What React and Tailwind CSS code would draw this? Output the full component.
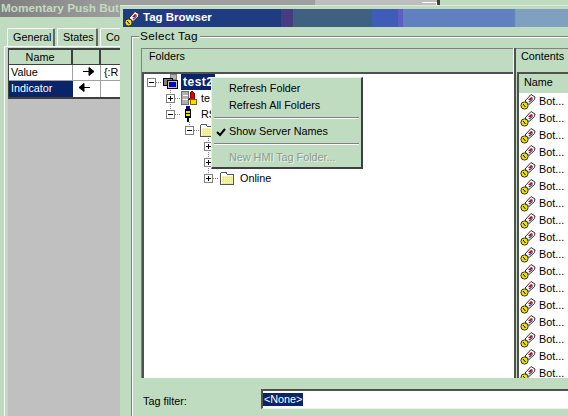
const TagIcon = ({ className = "" }) => (
  <svg width="16" height="17" viewBox="0 0 16 17" className={className}>
    <path d="M5 8 L11 1.5 L15 4 L14.5 6.5 L9 11.5 Z" fill="#fff" stroke="#303030" />
    <path d="M8 7 L11 4 L13 5 L10.5 7.5 Z" fill="#d80000" />
    <path d="M8.5 8.5 L10.5 7.5 L13 5.5 L12.5 7 L9.5 9.5 Z" fill="#1030c0" />
    <circle cx="4.5" cy="12.5" r="3.6" fill="#f0e000" stroke="#303030" />
    <path d="M3 11 L5.5 14" stroke="#000" />
  </svg>
);

// one tree row's guide lines and +/- box
const Guides = ({ x, sign, up, down, width }) => (
  <svg width={width} height="16" className="shrink-0" shapeRendering="crispEdges">
    {up && <path d={`M${x + 0.5} 0 V4`} stroke="#808080" strokeDasharray="1 1" />}
    {down && <path d={`M${x + 0.5} 12 V16`} stroke="#808080" strokeDasharray="1 1" />}
    <path d={`M${x + 5} 8.5 H${width}`} stroke="#808080" strokeDasharray="1 1" />
    <rect x={x - 4 + 0.5} y="4.5" width="8" height="8" fill="#fff" stroke="#808080" />
    <path d={`M${x - 2} 8.5 H${x + 3}`} stroke="#000" />
    {sign === "+" && <path d={`M${x + 0.5} 6 V11`} stroke="#000" />}
  </svg>
);

const Folder = () => (
  <svg width="17" height="16" viewBox="0 0 17 16" className="shrink-0" shapeRendering="crispEdges">
    <path d="M1.5 14.5 V3.5 L3 2.5 H7 L8.5 4.5 H14.5 V14.5 Z" fill="#fff" stroke="#555" />
    <rect x="3" y="6" width="11" height="8" fill="#f2ec7a" />
    <path d="M3 6 H14 M3 8 H14 M3 10 H14 M3 12 H14" stroke="#fffbd0" strokeDasharray="1 1" />
  </svg>
);

const Computers = () => (
  <svg width="18" height="16" viewBox="0 0 18 16" className="shrink-0" shapeRendering="crispEdges">
    <rect x="8.5" y="0.5" width="6" height="5" fill="#b0b0b0" stroke="#808080" />
    <rect x="1.5" y="4.5" width="9" height="7" fill="#808080" stroke="#000" />
    <rect x="5.5" y="6.5" width="10" height="8" fill="#c0c0c0" stroke="#000" />
    <rect x="7" y="8" width="7" height="5" fill="#0000d0" />
  </svg>
);

const Server = () => (
  <svg width="17" height="16" viewBox="0 0 17 16" className="shrink-0" shapeRendering="crispEdges">
    <rect x="0.5" y="1.5" width="7" height="13" fill="#b0b0b0" stroke="#707070" />
    <path d="M2 5.5 H7 M2 9.5 H7" stroke="#fff" />
    <path d="M9 8 V3 L11 1 L13 3 V8 L14 9 H8 Z" fill="#e00000" stroke="#800000" />
    <rect x="9.5" y="9.5" width="6" height="5" fill="#f0e000" stroke="#806000" />
  </svg>
);

const Driver = () => (
  <svg width="12" height="16" viewBox="0 0 12 16" className="shrink-0" shapeRendering="crispEdges">
    <rect x="5" y="0" width="4" height="3" fill="#0000c0" />
    <rect x="4" y="3" width="6" height="9" fill="#000" />
    <rect x="5" y="5" width="4" height="2" fill="#f0e000" />
    <rect x="5" y="8" width="4" height="2" fill="#f0e000" />
    <rect x="6" y="12" width="2" height="4" fill="#000" />
  </svg>
);

const TabBtn = ({ label, w }) => (
  <div className={`${w} h-[18px] mr-[2px] shrink-0 pl-[5px] flex items-center rounded-t-[2px] border-t border-l border-white border-r-2 border-r-[#606860]`}>
    {label}
  </div>
);

const rows = Array.from({ length: 17 });

export default function App() {
  return (
    <div className="w-[568px] h-[416px] flex overflow-hidden bg-[#c0dcc0] text-black text-[10.8px] font-['Liberation_Sans',sans-serif]">
      {/* window behind */}
      <div className="w-[120px] shrink-0 flex flex-col overflow-hidden">
        <div className="h-[17px] bg-[linear-gradient(90deg,#808080,#a09fa0)] text-[#c0dcc0] font-bold text-[11.8px] leading-[17px] pl-[1px] whitespace-nowrap">
          Momentary Push But
        </div>
        <div className="flex pl-[7px] mt-[11px] overflow-hidden">
          <TabBtn label="General" w="w-[48px]" />
          <TabBtn label="States" w="w-[41px]" />
          <TabBtn label="Con" w="w-[40px]" />
        </div>
        <div className="flex-1 ml-[4px] border-l border-t border-white pl-[3px] pt-[1px] flex flex-col min-h-0">
          <div className="border-l border-t-2 border-[#404040] grid grid-cols-[64px_28px_1fr] grid-rows-[15px_16px_16px] border-b-2 bg-white">
            <div className="bg-[#c0dcc0] border-r-2 border-b border-[#404040] text-center leading-[15px]">Name</div>
            <div className="bg-[#c0dcc0] border-r-2 border-b border-[#404040]" />
            <div className="bg-[#c0dcc0] border-b border-[#404040]" />
            <div className="border-r border-b border-[#a0a0a0] pl-[2px] leading-[15px]">Value</div>
            <div className="border-r border-b border-[#a0a0a0] flex justify-end items-center pr-[5px] pb-[2px]">
              <svg width="12" height="9" viewBox="0 0 12 9"><path d="M0 4.5 H7 M6 0.5 L11 4.5 L6 8.5 Z" stroke="#000" fill="#000" /></svg>
            </div>
            <div className="border-b border-[#a0a0a0] pl-[3px] leading-[15px]">{"{:R"}</div>
            <div className="bg-[#0a246a] text-white pl-[2px] leading-[15px]">Indicator</div>
            <div className="border-r border-[#a0a0a0] flex items-center pl-[5px] pb-[3px]">
              <svg width="12" height="9" viewBox="0 0 12 9"><path d="M12 4.5 H5 M6 0.5 L1 4.5 L6 8.5 Z" stroke="#000" fill="#000" /></svg>
            </div>
            <div />
          </div>
          <div className="flex-1 bg-[#c0c0c0]" />
        </div>
      </div>

      {/* tag browser */}
      <div className="flex-1 min-w-0 flex flex-col">
        <div className="h-[6px] flex border-b border-[#d8ecd8] shrink-0">
          <div className="w-[195px] bg-[#a09fa0]" />
          <div className="w-[122px] bg-[#bebebe] flex justify-end">
            <div className="w-[15px] h-[3px] mt-[2px] border-t border-r border-white" />
          </div>
          <div className="w-[3px] bg-[#404040]" />
        </div>
        <div className="h-[3px] shrink-0" />
        <div className="h-[18px] ml-[3px] shrink-0 flex items-center bg-[linear-gradient(90deg,#1f3c80_41px,#2a3488_41px,#2a3488_60px,#1f3c80_60px,#1f3c80_158px,#483c80_158px,#483c80_170px,#3f6080_170px,#3f6080_249px,#3f5cb8_249px,#3f5cb8_275px,#5c60c0_275px,#5c60c0_280px,#6080c0_280px,#6080c0_391px,#80a0c0_393px)]">
          <TagIcon className="ml-[1px] mr-[3px]" />
          <span className="text-white font-bold text-[11.5px]">Tag Browser</span>
        </div>

        <div className="flex-1 min-h-0 flex flex-col pl-[11px]">
          <fieldset className="flex-1 min-h-0 border-l border-t border-[#808080] shadow-[inset_1px_1px_0_#fff] min-w-0 mt-[2px]">
            <legend className="ml-[7px] pl-[1px] pr-[2px] leading-[14px] bg-[#c0dcc0] text-[11.8px] tracking-[0.3px]">Select Tag</legend>
            <div className="flex pl-[9px] pt-[5px] overflow-hidden">
              <div className="w-[372px] shrink-0 flex flex-col border-l border-[#808080]">
                <div className="h-[24px] border-t border-[#808080] pl-[7px] leading-[14px]">Folders</div>
                <div className="relative h-[306px] bg-white border-t-2 border-l-2 border-[#505050]">
                  {/* tree */}
                  <div className="flex items-center h-4">
                    <Guides x={7} sign="-" width={18} />
                    <Computers />
                    <span className="ml-[1px] pl-[2px] w-[34px] shrink-0 h-4 bg-[#0a246a] text-white font-bold text-[12px] tracking-[0.5px] leading-[16px]">test2</span>
                  </div>
                  <div className="flex items-center h-4">
                    <Guides x={26} sign="+" up down width={37} />
                    <Server />
                    <span className="ml-[3px]">te</span>
                  </div>
                  <div className="flex items-center h-4">
                    <Guides x={26} sign="-" up width={37} />
                    <Driver />
                    <span className="ml-[8px]">RS</span>
                  </div>
                  <div className="flex items-center h-4">
                    <Guides x={45} sign="-" up width={55} />
                    <Folder />
                  </div>
                  <div className="flex items-center h-4 pl-[60px]"><Guides x={4} sign="+" up down width={15} /></div>
                  <div className="flex items-center h-4 pl-[60px]"><Guides x={4} sign="+" up down width={15} /></div>
                  <div className="flex items-center h-4 pl-[60px]">
                    <Guides x={4} sign="+" up width={15} />
                    <Folder />
                    <span className="ml-[4px]">Online</span>
                  </div>

                  {/* context menu */}
                  <div className="absolute left-[67px] top-[3px] w-[152px] h-[92px] bg-[#c0dcc0] border-t border-l border-[#e4f2e4] border-r-2 border-b-2 border-r-[#404040] border-b-[#404040] flex flex-col">
                    <div className="h-[17px] mt-[2px] pl-[17px] leading-[17px]">Refresh Folder</div>
                    <div className="h-[17px] pl-[17px] leading-[17px]">Refresh All Folders</div>
                    <div className="mx-[2px] mt-[3px] mb-[4px] border-t border-b border-t-[#808080] border-b-white" />
                    <div className="h-[17px] pl-[4px] flex items-center">
                      <svg width="13" height="10" viewBox="0 0 13 10"><path d="M1 5 L4 8 L9 2" fill="none" stroke="#000" strokeWidth="2" /></svg>
                      <span>Show Server Names</span>
                    </div>
                    <div className="mx-[2px] mt-[3px] mb-[4px] border-t border-b border-t-[#808080] border-b-white" />
                    <div className="h-[17px] pl-[17px] leading-[17px] text-[#8c9c8c] [text-shadow:1px_1px_0_#e8f4e8]">New HMI Tag Folder...</div>
                  </div>
                </div>
              </div>

              <div className="w-[3px] shrink-0 border-l border-white bg-[#c0dcc0] border-r-2 border-r-[#505050]" />

              <div className="flex-1 min-w-0 flex flex-col">
                <div className="h-[24px] pl-[5px] border-t border-[#808080] leading-[14px] whitespace-nowrap">Contents</div>
                <div className="h-[306px] ml-[1px] bg-white border-t-2 border-l-2 border-[#505050] overflow-hidden">
                  <div className="h-[19px] bg-[#c0dcc0] pl-[5px] leading-[16px]">Name</div>
                  {rows.map((_, i) => (
                    <div key={i} className="h-[17px] flex items-center pl-[1px]">
                      <TagIcon className="shrink-0" />
                      <span className="ml-[3px]">Bot...</span>
                    </div>
                  ))}
                </div>
              </div>
            </div>

            <div className="flex items-center pl-[11px] pt-[11px]">
              <span className="w-[118px] shrink-0 pt-[4px]">Tag filter:</span>
              <div className="flex-1 h-[20px] bg-white border-t-2 border-l-2 border-[#505050] border-b border-b-[#e8f4e8] flex items-center">
                <span className="bg-[#0a246a] text-white leading-[13px] px-[1px]">{"<None>"}</span>
              </div>
            </div>
          </fieldset>
        </div>
      </div>
    </div>
  );
}
